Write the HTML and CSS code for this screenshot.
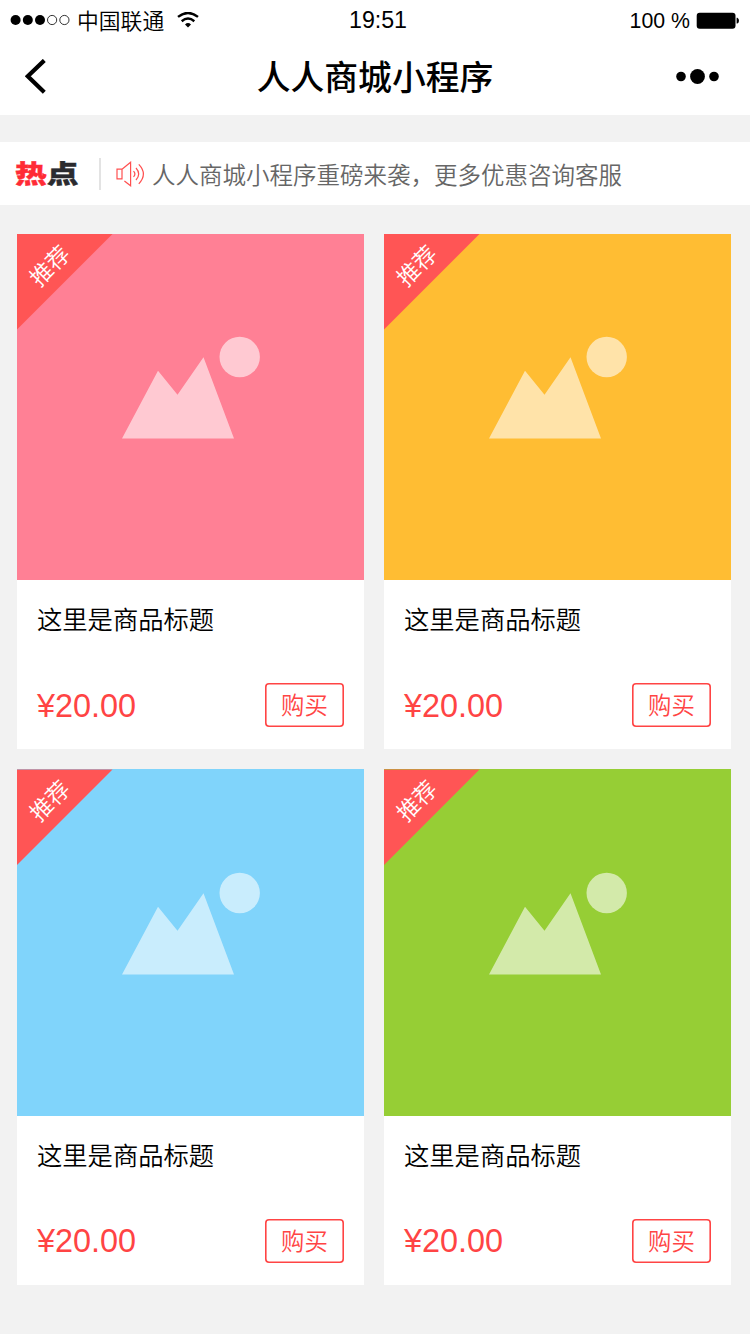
FILE: index.html
```html
<!DOCTYPE html>
<html lang="zh-CN">
<head>
<meta charset="utf-8">
<title>人人商城小程序</title>
<link rel="stylesheet" href="styles.css">
</head>
<body>
<svg class="defs" aria-hidden="true">
  <symbol id="picture" viewBox="0 0 138 103">
    <path d="M0 102.5 36 34.8 55.5 58.8 81.5 21.2 112 102.5Z"/>
    <circle cx="117.7" cy="21" r="20.2"/>
  </symbol>
</svg>
<header class="header">
  <div class="status">
    <div class="status-left">
      <svg class="signal" viewBox="0 0 60 12">
        <circle cx="5.6" cy="6" r="5"/><circle cx="17.8" cy="6" r="5"/><circle cx="30" cy="6" r="5"/>
        <circle class="empty" cx="42.1" cy="6" r="4.6"/><circle class="empty" cx="54.4" cy="6" r="4.6"/>
      </svg>
      <span class="carrier">中国联通</span>
      <svg class="wifi" viewBox="0 0 22 16">
        <path class="arc" d="M1 4.9Q11-3 21 4.9M4.7 9.2Q11 4 17.3 9.2"/>
        <path d="M8 12.4Q11 9.8 14 12.4L11 15.6Z"/>
      </svg>
    </div>
    <span class="time">19:51</span>
    <div class="status-right">
      <span class="percent">100 %</span>
      <svg class="battery" viewBox="0 0 44 18">
        <rect class="shell" x=".7" y=".7" width="38.8" height="16" rx="3"/>
        <rect x="2" y="2" width="36.2" height="13.4" rx="1"/>
        <path d="M40.6 5.8h.8q1.6 1 1.6 2.9t-1.6 2.9h-.8Z"/>
      </svg>
    </div>
  </div>
  <nav class="nav">
    <svg class="back" viewBox="0 0 22 36"><path d="M19.3 1.4 2.8 17.3 19.3 33.2"/></svg>
    <h1 class="nav-title">人人商城小程序</h1>
    <svg class="more" viewBox="0 0 44 16"><circle cx="5" cy="7.5" r="4.8"/><circle cx="21.5" cy="7.5" r="7.4"/><circle cx="38" cy="7.5" r="4.8"/></svg>
  </nav>
</header>

<section class="notice">
  <div class="hot"><span class="hot-red">热</span><span>点</span></div>
  <div class="divider"></div>
  <svg class="speaker" viewBox="0 0 30 26">
    <path d="M1 8.2h5v9.6H1ZM6 8.2 14.6 1.2v23.6L8.4 20M17.5 10.2Q20.3 13 17.5 15.9M20 7Q25.4 13 20 19M22.8 3.3Q32 13 22.8 22.8"/>
  </svg>
  <p class="notice-text">人人商城小程序重磅来袭，更多优惠咨询客服</p>
</section>

<main class="goods">
  <article class="card">
    <div class="photo pink"><svg class="picture"><use href="#picture"/></svg><div class="ribbon"><span>推荐</span></div></div>
    <h2 class="title">这里是商品标题</h2>
    <div class="buy-row"><span class="price">¥20.00</span><button class="buy">购买</button></div>
  </article>
  <article class="card">
    <div class="photo yellow"><svg class="picture"><use href="#picture"/></svg><div class="ribbon"><span>推荐</span></div></div>
    <h2 class="title">这里是商品标题</h2>
    <div class="buy-row"><span class="price">¥20.00</span><button class="buy">购买</button></div>
  </article>
  <article class="card">
    <div class="photo blue"><svg class="picture"><use href="#picture"/></svg><div class="ribbon"><span>推荐</span></div></div>
    <h2 class="title">这里是商品标题</h2>
    <div class="buy-row"><span class="price">¥20.00</span><button class="buy">购买</button></div>
  </article>
  <article class="card">
    <div class="photo green"><svg class="picture"><use href="#picture"/></svg><div class="ribbon"><span>推荐</span></div></div>
    <h2 class="title">这里是商品标题</h2>
    <div class="buy-row"><span class="price">¥20.00</span><button class="buy">购买</button></div>
  </article>
</main>
</body>
</html>
```
FILE: styles.css
```css
* { box-sizing: border-box; }
body {
  margin: 0;
  min-height: 1334px;
  background: #f2f2f2;
  color: #000;
  font-family: "Liberation Sans", "Noto Sans CJK SC", sans-serif;
}
h1, h2, p { margin: 0; font-weight: 400; }
svg { display: block; flex: none; }
.defs { display: none; }

.header { height: 115px; background: #fff; }
.status {
  height: 38px;
  padding: 0 10px;
  display: grid;
  grid-template-columns: 1fr auto 1fr;
  align-items: center;
  line-height: 38px;
}
.status-left, .status-right { display: flex; align-items: center; }
.status-right { justify-content: flex-end; }
.signal { width: 60px; height: 12px; }
.empty { fill: none; stroke: #000; stroke-width: .8; }
.carrier { margin-left: 7px; font-family: "Noto Sans CJK SC DemiLight", "Noto Sans CJK SC", sans-serif; font-size: 21.8px; font-weight: 350; }
.wifi { width: 22px; height: 16px; margin-left: 13px; }
.arc { fill: none; stroke: #000; stroke-width: 2.4; }
.time { font-size: 23.2px; padding-left: 6px; line-height: 38px; }
.percent { font-size: 21.3px; padding-top: 2px; }
.battery { width: 44px; height: 18px; margin: 1px 0 0 6px; }

.nav {
  height: 77px;
  padding: 0 30px 0 25px;
  display: flex;
  align-items: center;
  justify-content: space-between;
}
.back { width: 22px; height: 36px; margin-right: 22px; }
.back path { fill: none; stroke: #000; stroke-width: 4.2; stroke-linejoin: miter; }
.nav-title { font-size: 33.8px; font-weight: 500; line-height: 77px; padding: 4px 0 0 5px; }
.more { width: 44px; height: 16px; }

.notice {
  height: 63px;
  margin-top: 27px;
  padding-left: 15px;
  display: flex;
  align-items: center;
  background: #fff;
}
.hot {
  width: 63px;
  display: flex;
  font-size: 31.8px;
  line-height: 40px;
  font-weight: 900;
  color: #2b2b2f;
  -webkit-text-stroke: .5px currentColor;
  transform: scaleY(.8);
}
.hot-red { color: #ff2b35; }
.divider { width: 2px; height: 32px; margin-left: 21px; background: #e3e3e3; }
.speaker { width: 30px; height: 26px; margin-left: 15px; }
.speaker path { fill: none; stroke: #ff5050; stroke-width: 1.2; }
.notice-text { margin-left: 6px; padding-top: 5px; color: #666; font-size: 23.5px; line-height: 63px; font-weight: 350; }

.goods {
  padding: 29px 19px 0 17px;
  display: grid;
  grid-template-columns: 347px 347px;
  grid-auto-rows: 515.4px;
  gap: 20px;
}
.card { background: #fff; }
.photo {
  position: relative;
  height: 346.4px;
  padding: 102.3px 0 0 105px;
}
.pink { background: #ff8095; }
.yellow { background: #ffbd33; }
.blue { background: #80d4fb; }
.green { background: #96ce35; }
.picture { width: 138px; height: 103px; fill: #fff; opacity: .58; }
.ribbon {
  position: absolute;
  left: 0;
  top: 0;
  width: 95.5px;
  height: 95.5px;
  padding: 16px 0 0 9.5px;
  background: #ff5555;
  clip-path: polygon(0 0, 100% 0, 0 100%);
}
.ribbon span {
  display: block;
  width: 46px;
  height: 32px;
  line-height: 32px;
  font-size: 22.8px;
  font-weight: 350;
  color: #fff;
  transform: rotate(-45deg);
}
.title { padding: 22px 20px 0; font-size: 25.3px; line-height: 37px; font-weight: 350; }
.buy-row {
  margin-top: 43.8px;
  padding: 0 20px;
  height: 44px;
  display: flex;
  align-items: center;
  justify-content: space-between;
}
.price { color: #ff4444; font-size: 32.4px; line-height: 44px; padding-top: 1.5px; }
.buy {
  width: 79px;
  height: 44px;
  padding: 2px 0 0;
  border: 0;
  box-shadow: inset 0 0 0 1.6px #ff4444;
  border-radius: 4px;
  background: #fff;
  color: #ff4444;
  font-family: inherit;
  font-size: 23.4px;
  font-weight: 350;
  line-height: 42px;
}
```
